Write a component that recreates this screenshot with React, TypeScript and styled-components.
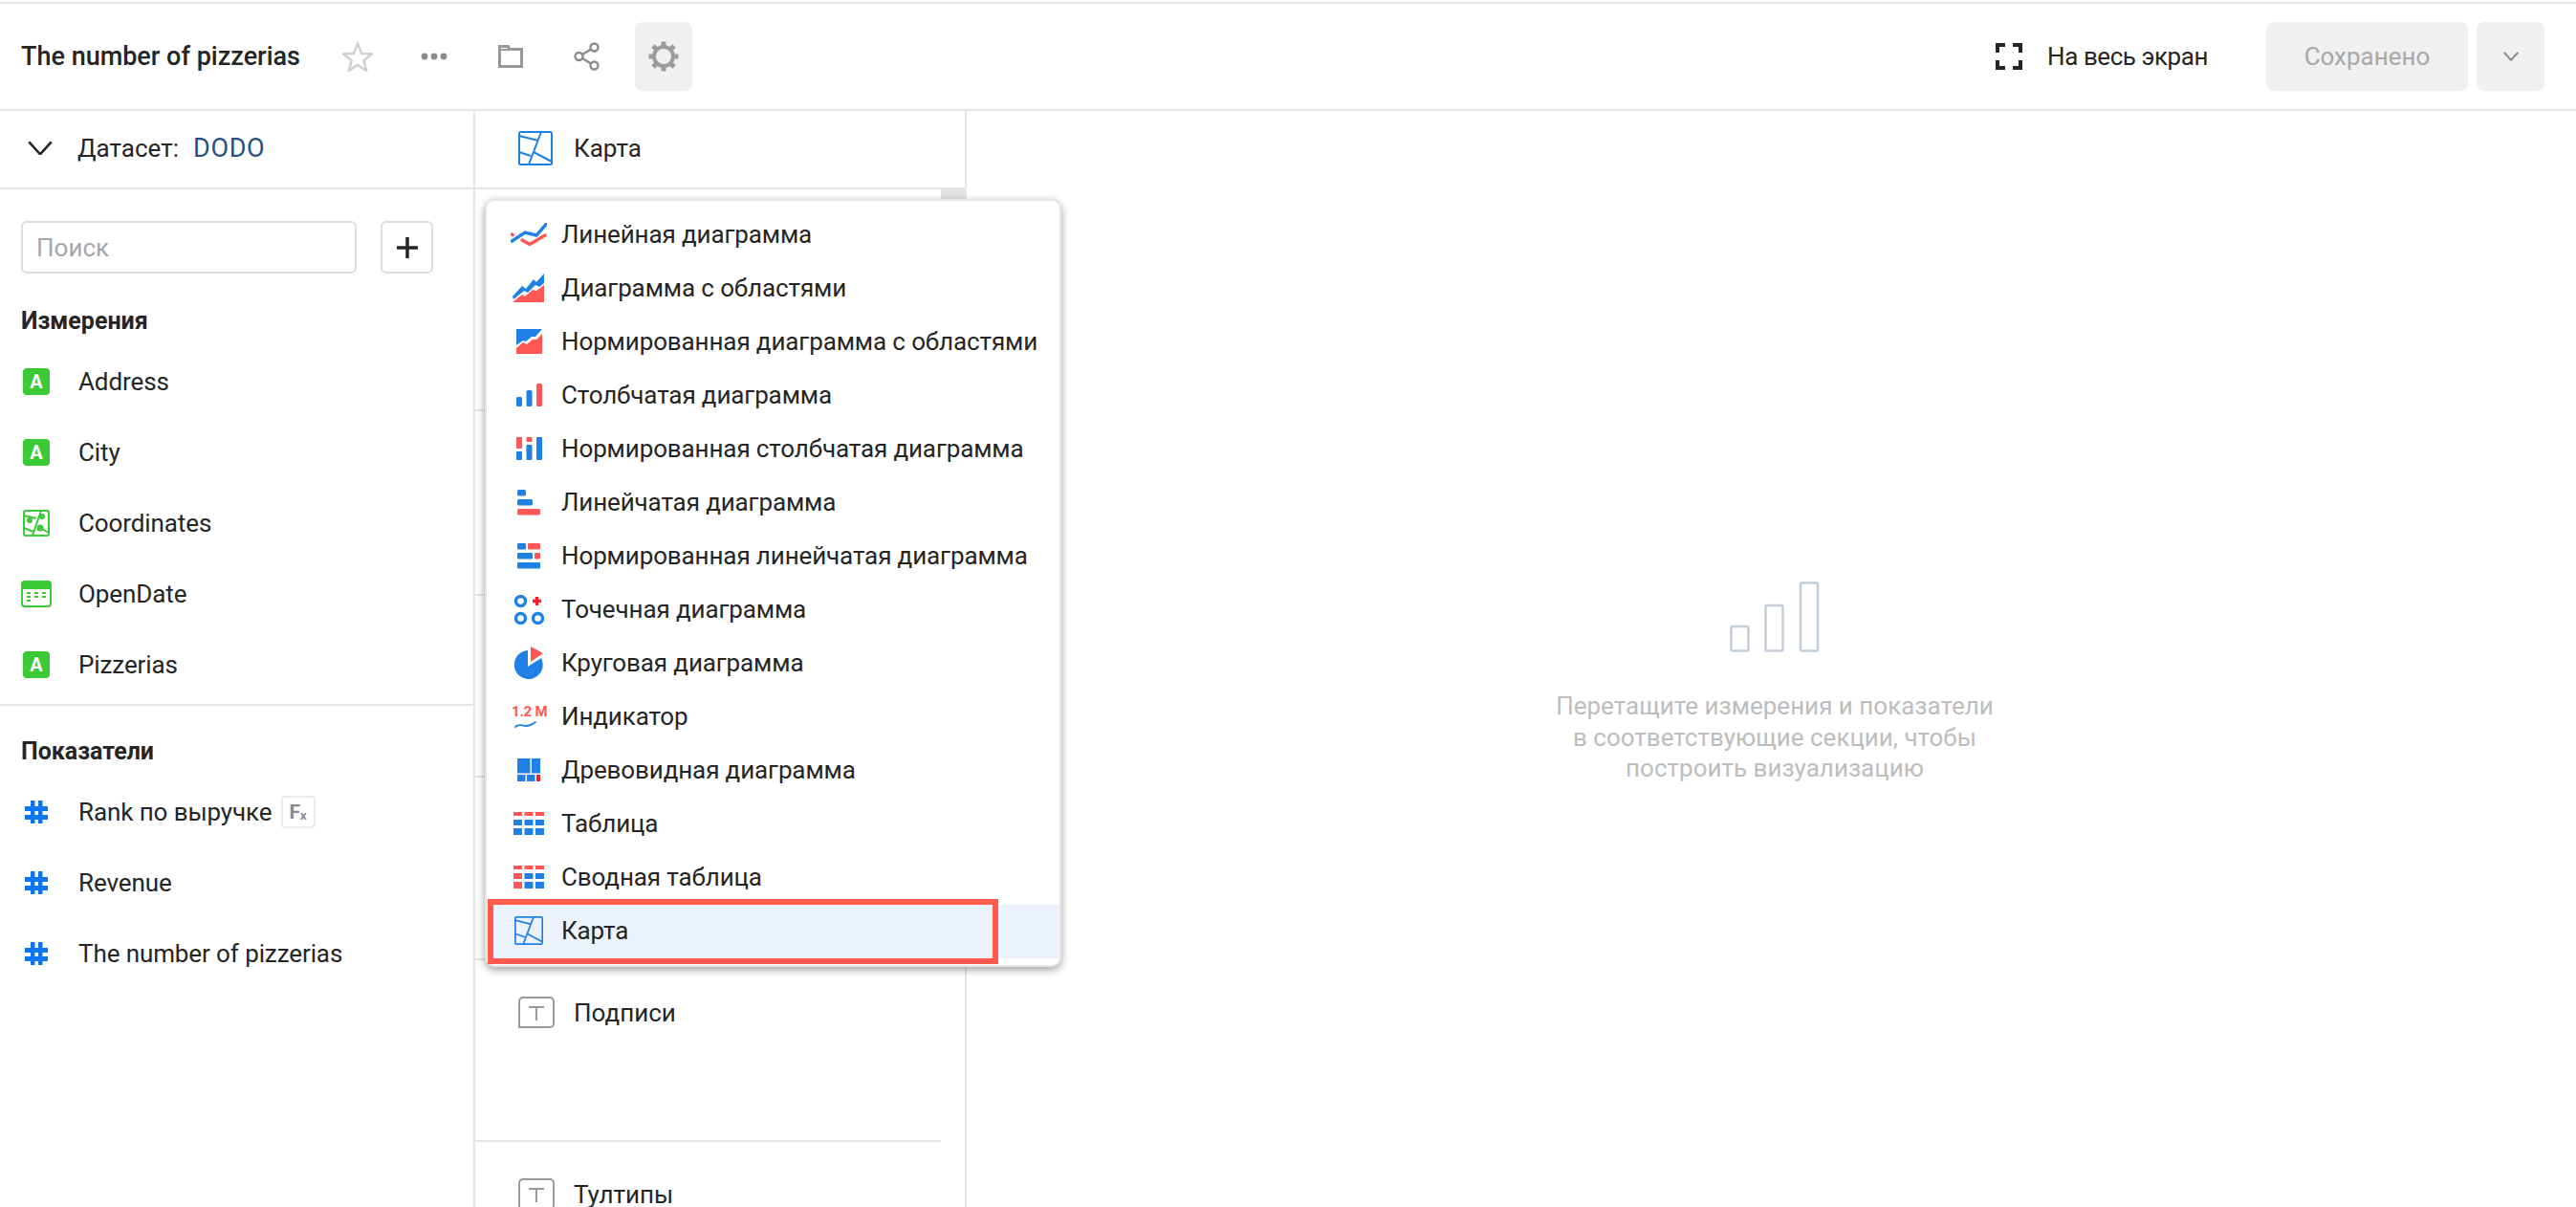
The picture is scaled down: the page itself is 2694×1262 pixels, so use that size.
import React from "react";
import styled, { createGlobalStyle } from "styled-components";

const GlobalStyle = createGlobalStyle`
  html, body {
    margin: 0;
    padding: 0;
    background: #fff;
  }
  * {
    box-sizing: border-box;
  }
`;

const BLUE = "#1f80e6";
const RED = "#ff5656";
const GREEN = "#3bc935";
const LINE = "#e5e5e5";

const Page = styled.div`
  width: 2694px;
  height: 1262px;
  overflow: hidden;
  display: flex;
  flex-direction: column;
  padding-top: 2px;
  background: #fff;
  color: #252525;
  font-family: Roboto, "Noto Sans", sans-serif;
  font-size: 26px;
`;

const Header = styled.header`
  height: 114px;
  flex: none;
  display: flex;
  align-items: center;
  padding: 0 33px 0 22px;
  border-top: 2px solid ${LINE};
  border-bottom: 2px solid ${LINE};
`;

const Title = styled.h1`
  width: 322px;
  margin: 0;
  font-size: 27px;
  font-weight: 500;
  white-space: nowrap;
`;

const ActionGroup = styled.div`
  display: flex;
  gap: 20px;
`;

const IconButton = styled.button<{ $active?: boolean }>`
  width: 60px;
  height: 72px;
  padding: 0;
  border: none;
  border-radius: 8px;
  display: flex;
  align-items: center;
  justify-content: center;
  background: ${(p) => (p.$active ? "#f0f0f0" : "transparent")};
`;

const Spacer = styled.div`
  flex: 1;
`;

const FullscreenLabel = styled.div`
  display: flex;
  align-items: center;
  gap: 26px;
  margin-right: 61px;
  letter-spacing: -0.45px;
`;

const SaveButton = styled.button`
  width: 211px;
  height: 72px;
  border: none;
  border-radius: 8px;
  background: #f0f0f0;
  color: #a8a8a8;
  font: inherit;
`;

const MoreButton = styled.button`
  width: 71px;
  height: 72px;
  margin-left: 9px;
  padding: 0;
  border: none;
  border-radius: 8px;
  background: #f0f0f0;
  display: flex;
  align-items: center;
  justify-content: center;
`;

const Body = styled.div`
  flex: 1;
  display: flex;
  min-height: 0;
`;

const Sidebar = styled.aside`
  width: 497px;
  flex: none;
  border-right: 2px solid ${LINE};
`;

const DatasetRow = styled.div`
  height: 82px;
  display: flex;
  align-items: center;
  padding: 0 0 3px 29px;
  border-bottom: 2px solid ${LINE};
`;

const DatasetLabel = styled.span`
  margin-left: 26px;
`;

const DatasetLink = styled.span`
  margin-left: 15px;
  color: #27527f;
  font-size: 27px;
  letter-spacing: 0.7px;
`;

const SearchRow = styled.div`
  display: flex;
  gap: 25px;
  padding: 33px 0 22px 22px;
`;

const SearchInput = styled.div`
  width: 351px;
  height: 55px;
  padding-left: 14px;
  border: 2px solid #dcdcdc;
  border-radius: 6px;
  display: flex;
  align-items: center;
  color: #a6a6a6;
`;

const AddButton = styled.div`
  width: 55px;
  height: 55px;
  border: 2px solid #dcdcdc;
  border-radius: 6px;
  display: flex;
  align-items: center;
  justify-content: center;
`;

const GroupTitle = styled.h2`
  height: 54px;
  margin: 0;
  padding-left: 22px;
  display: flex;
  align-items: center;
  font-size: 25px;
  font-weight: 700;
`;

const FieldRow = styled.div`
  height: 74px;
  display: flex;
  align-items: center;
  letter-spacing: -0.1px;
`;

const FieldIcon = styled.div`
  width: 76px;
  padding-left: 38px;
  margin-right: 6px;
  display: flex;
  justify-content: center;
  transform: translateX(-19px);
  flex: none;
`;

const AttrBadge = styled.span`
  width: 28px;
  height: 28px;
  border-radius: 4px;
  background: ${GREEN};
  color: #fff;
  font-size: 20px;
  font-weight: 700;
  display: flex;
  align-items: center;
  justify-content: center;
`;

const FxBadge = styled.span`
  width: 36px;
  height: 34px;
  margin-left: 9px;
  border: 2px solid #ececec;
  border-radius: 4px;
  color: #8a8a8a;
  font-size: 21px;
  font-weight: 700;
  display: flex;
  align-items: center;
  justify-content: center;

  sub {
    font-size: 13px;
    line-height: 1;
    margin-top: 6px;
  }
`;

const Divider = styled.div`
  height: 2px;
  margin: 4px 0 20px;
  background: ${LINE};
`;

const Middle = styled.section`
  width: 514px;
  flex: none;
  position: relative;
  border-right: 2px solid ${LINE};
  display: flex;
  flex-direction: column;
`;

const ChartTypeRow = styled.div`
  height: 82px;
  flex: none;
  display: flex;
  align-items: center;
  padding: 0 0 3px 45px;
  gap: 22px;
  border-bottom: 2px solid ${LINE};
`;

const SectionsArea = styled.div`
  flex: 1;
  display: flex;
  min-height: 0;
`;

const Sections = styled.div`
  flex: 1;
`;

const Section = styled.div<{ $height: number }>`
  height: ${(p) => p.$height}px;
  padding: 38px 0 0 45px;
  border-bottom: 2px solid ${LINE};

  &:last-child {
    border-bottom: none;
  }
`;

const PlaceholderRow = styled.div`
  display: flex;
  align-items: center;
  gap: 20px;
`;

const ScrollTrack = styled.div`
  width: 25px;
  flex: none;
`;

const ScrollThumb = styled.div`
  height: 300px;
  background: #e4e4e4;
`;

const Menu = styled.div`
  position: absolute;
  left: 10px;
  top: 92px;
  width: 603px;
  padding: 8px 0 7px;
  background: #fff;
  border: 2px solid ${LINE};
  border-radius: 10px;
  box-shadow: 0 3px 9px rgba(0, 0, 0, 0.38);
  z-index: 2;
`;

const MenuItem = styled.div<{ $active?: boolean }>`
  position: relative;
  height: 56px;
  padding: 0 0 2px 23px;
  display: flex;
  align-items: center;
  gap: 13px;
  white-space: nowrap;
  letter-spacing: -0.12px;
  background: ${(p) => (p.$active ? "#ebf2fc" : "transparent")};
`;

const MenuIcon = styled.div`
  width: 42px;
  flex: none;
  display: flex;
  justify-content: center;
`;

const Annotation = styled.div`
  position: absolute;
  left: 1px;
  top: -6px;
  width: 534px;
  height: 68px;
  border: 6px solid #ff5a4f;
`;

const Canvas = styled.main`
  flex: 1;
  padding: 492px 0 0 7px;
  display: flex;
  flex-direction: column;
  align-items: center;
`;

const EmptyText = styled.p`
  margin: 40px 0 0;
  color: #bdbdbd;
  line-height: 32.5px;
  text-align: center;
`;

function StarIcon() {
  return (
    <svg width="32" height="32" viewBox="0 0 32 32" fill="none" stroke="#cfcfcf" strokeWidth="2.4">
      <path d="M16 2.5l4 10.4 10.8.6-8.4 6.9 2.8 10.6-9.2-6-9.2 6 2.8-10.6-8.4-6.9 10.8-.6z" />
    </svg>
  );
}

function DotsIcon() {
  return (
    <svg width="28" height="8" viewBox="0 0 28 8" fill="#8c8c8c">
      <circle cx="4" cy="4" r="3.4" />
      <circle cx="14" cy="4" r="3.4" />
      <circle cx="24" cy="4" r="3.4" />
    </svg>
  );
}

function FolderIcon() {
  return (
    <svg width="26" height="24" viewBox="0 0 26 24" fill="none" stroke="#999" strokeWidth="3">
      <path d="M1.5 22.5V1.5h9l1.5 3h12.500v18z" />
      <path d="M1.500 5h11" strokeWidth="2" />
    </svg>
  );
}

function ShareIcon() {
  return (
    <svg width="28" height="30" viewBox="0 0 28 30" fill="none" stroke="#8c8c8c" strokeWidth="2.400">
      <circle cx="21.500" cy="5.500" r="4" />
      <circle cx="5.500" cy="15" r="4" />
      <circle cx="21.500" cy="24.500" r="4" />
      <path d="M9 13l9-5.500M9 17l9 5.500" />
    </svg>
  );
}

function GearIcon() {
  const teeth = [0, 45, 90, 135, 180, 225, 270, 315];
  return (
    <svg width="34" height="34" viewBox="0 0 34 34" fill="none" stroke="#9c9c9c">
      <circle cx="17" cy="17" r="10" strokeWidth="4" />
      {teeth.map((deg) => (
        <path key={deg} d="M17 1.500v6" strokeWidth="5" transform={`rotate(${deg} 17 17)`} />
      ))}
    </svg>
  );
}

function FullscreenIcon() {
  return (
    <svg width="28" height="28" viewBox="0 0 28 28" fill="none" stroke="#252525" strokeWidth="4">
      <path d="M10 2H2v8M18 2h8v8M10 26H2v-8M18 26h8v-8" />
    </svg>
  );
}

function ChevronIcon({ size, color, width }: { size: number; color: string; width: number }) {
  return (
    <svg width={size} height={size * 0.6} viewBox="0 0 20 12" fill="none" stroke={color} strokeWidth={width}>
      <path d="M1 1l9 10 9-10" />
    </svg>
  );
}

function PlusIcon() {
  return (
    <svg width="24" height="24" viewBox="0 0 24 24" fill="none" stroke="#252525" strokeWidth="3.500">
      <path d="M12 1v22M1 12h22" />
    </svg>
  );
}

function MapIcon({ size }: { size: number }) {
  return (
    <svg width={size} height={size} viewBox="0 0 36 36" fill="none" stroke={BLUE} strokeWidth="2">
      <rect x="1" y="1" width="34" height="34" rx="1.500" />
      <path d="M1 5l20 5M24 1L11 35M16 22l19 10M1 22l12 4" />
    </svg>
  );
}

function CoordinatesIcon() {
  return (
    <svg width="28" height="28" viewBox="0 0 28 28" fill="none" stroke={GREEN} strokeWidth="2">
      <rect x="1" y="1" width="26" height="26" rx="2" />
      <path d="M1 6l13 3M19 1l-9 26M1 19l10 4M18 19l9 5" />
      <g fill={GREEN} stroke="none">
        <circle cx="7" cy="11" r="3" />
        <circle cx="20" cy="7" r="3" />
        <circle cx="18" cy="19" r="3.500" />
      </g>
    </svg>
  );
}

function DateIcon() {
  return (
    <svg width="32" height="28" viewBox="0 0 32 28" fill="none">
      <rect x="1" y="1" width="30" height="26" rx="3" stroke={GREEN} strokeWidth="2" />
      <path d="M1 4a3 3 0 0 1 3-3h24a3 3 0 0 1 3 3v5H1z" fill={GREEN} />
      <g fill={GREEN}>
        <rect x="6" y="12" width="4" height="2" />
        <rect x="6" y="16" width="4" height="2" />
        <rect x="6" y="20" width="4" height="2" />
        <rect x="14" y="12" width="4" height="2" />
        <rect x="14" y="16" width="4" height="2" />
        <rect x="22" y="12" width="4" height="2" />
        <rect x="22" y="16" width="4" height="2" />
      </g>
    </svg>
  );
}

function HashIcon() {
  return (
    <svg width="24" height="24" viewBox="0 0 24 24" fill="#0f76ee">
      <rect x="6" y="0" width="4.500" height="24" />
      <rect x="14" y="0" width="4.500" height="24" />
      <rect x="0" y="6" width="24" height="5" />
      <rect x="0" y="15" width="24" height="5" />
    </svg>
  );
}

function TextFieldIcon() {
  return (
    <svg width="38" height="33" viewBox="0 0 38 33" fill="none" stroke="#999" strokeWidth="2">
      <path d="M5 1h28a4 4 0 0 1 4 4v23a4 4 0 0 1-4 4H1V5a4 4 0 0 1 4-4z" />
      <path d="M11 11h16M19 11v14" />
    </svg>
  );
}

function EmptyChartIcon() {
  return (
    <svg width="94" height="74" viewBox="0 0 94 74" fill="none" stroke="#c2cedc" strokeWidth="2.500">
      <rect x="1.500" y="47" width="18" height="25.500" rx="1.500" />
      <rect x="37.500" y="25" width="18" height="47.500" rx="1.500" />
      <rect x="74" y="1.500" width="18" height="71" rx="1.500" />
    </svg>
  );
}

function LineChartIcon() {
  return (
    <svg width="38" height="24" viewBox="0 0 38 24" fill="none" strokeWidth="3.400" strokeLinecap="round">
      <path d="M12 18l8 4.500 16-9.500" stroke={RED} />
      <path d="M1.500 12l1 .8" stroke={RED} />
      <path d="M1.500 19L15 10l12 3L37 1.500" stroke={BLUE} />
    </svg>
  );
}

function AreaChartIcon() {
  return (
    <svg width="34" height="30" viewBox="0 0 34 30">
      <path d="M0 24l10-11 4 3 8-10 3 3 8-9v10l-5 4-4-2-8 8-4-2L1 27z" fill={BLUE} />
      <path d="M0 30l10-8 3 2 8-7 4 1 8-6v18z" fill={RED} />
    </svg>
  );
}

function NormAreaIcon() {
  return (
    <svg width="27" height="26" viewBox="0 0 27 26">
      <path d="M0 0h27l-7 8h-4l-6 5-3-1-7 5z" fill={BLUE} />
      <path d="M0 26v-6l7-6 4 2 6-5h4l6-6v21z" fill={RED} />
    </svg>
  );
}

function ColumnsIcon() {
  return (
    <svg width="27" height="24" viewBox="0 0 27 24">
      <rect x="0" y="14" width="6" height="10" rx="1.500" fill={BLUE} />
      <rect x="10.500" y="7" width="6" height="17" rx="1.500" fill={BLUE} />
      <rect x="21" y="0" width="6" height="24" rx="1.500" fill={RED} />
    </svg>
  );
}

function NormColumnsIcon() {
  return (
    <svg width="27" height="24" viewBox="0 0 27 24">
      <rect x="0" y="0" width="6" height="12" rx="1" fill={RED} />
      <rect x="0" y="15" width="6" height="9" rx="1" fill={BLUE} />
      <rect x="10.500" y="0" width="6" height="5" rx="1" fill={RED} />
      <rect x="10.500" y="8" width="6" height="16" rx="1" fill={BLUE} />
      <rect x="21" y="0" width="6" height="24" rx="1" fill={BLUE} />
    </svg>
  );
}

function BarsIcon() {
  return (
    <svg width="24" height="27" viewBox="0 0 24 27">
      <rect x="0" y="0" width="9" height="6.500" rx="1.500" fill={BLUE} />
      <rect x="0" y="10" width="16" height="6.500" rx="1.500" fill={BLUE} />
      <rect x="0" y="20" width="24" height="6.500" rx="1.500" fill={RED} />
    </svg>
  );
}

function NormBarsIcon() {
  return (
    <svg width="24" height="27" viewBox="0 0 24 27">
      <rect x="0" y="0" width="9" height="6.500" rx="1" fill={BLUE} />
      <rect x="11" y="0" width="13" height="6.500" rx="1" fill={RED} />
      <rect x="0" y="10" width="16" height="6.500" rx="1" fill={BLUE} />
      <rect x="18" y="10" width="6" height="6.500" rx="1" fill={RED} />
      <rect x="0" y="20" width="24" height="6.500" rx="1" fill={BLUE} />
    </svg>
  );
}

function DotsChartIcon() {
  return (
    <svg width="31" height="31" viewBox="0 0 31 31" fill="none" stroke={BLUE} strokeWidth="3.400">
      <circle cx="6.500" cy="6.500" r="5" />
      <circle cx="6.500" cy="24.500" r="5" />
      <circle cx="24.500" cy="24.500" r="5" />
      <path d="M23.500 2v9M19 6.500h9" stroke="#f5222d" />
    </svg>
  );
}

function PieIcon() {
  return (
    <svg width="30" height="34" viewBox="0 0 30 34">
      <path d="M14 4A15 15 0 1 0 28 12L14 21z" fill={BLUE} />
      <path d="M17 0l13 7-13 9z" fill={RED} />
    </svg>
  );
}

function IndicatorIcon() {
  return (
    <svg width="42" height="26" viewBox="0 0 42 26" fill="none">
      <text x="3" y="13" fill={RED} fontFamily="Roboto, sans-serif" fontSize="15" fontWeight="700" letterSpacing="-0.2">
        1.2 M
      </text>
      <path d="M7 24c4-4 7-1 11-1s6-1 10-4" stroke={BLUE} strokeWidth="1.800" strokeLinecap="round" />
    </svg>
  );
}

function TreemapIcon() {
  return (
    <svg width="24" height="24" viewBox="0 0 24 24">
      <rect x="0" y="0" width="13.500" height="15.500" fill={BLUE} />
      <rect x="15" y="0" width="9" height="15.500" fill={BLUE} />
      <rect x="0" y="17" width="8.500" height="7" fill={BLUE} />
      <rect x="10" y="17" width="8.500" height="7" fill={BLUE} />
      <rect x="20" y="17" width="4" height="7" fill="#f5222d" />
    </svg>
  );
}

function TableIcon({ pivot }: { pivot?: boolean }) {
  const cols = [0, 11.500, 23];
  return (
    <svg width="32" height="24" viewBox="0 0 32 24">
      {cols.map((x, i) => (
        <React.Fragment key={x}>
          <rect x={x} y="0" width="9" height="4" fill={RED} />
          <rect x={x} y="8" width="9" height="6" fill={pivot && i === 0 ? RED : BLUE} />
          <rect x={x} y="17" width="9" height="7" fill={pivot && i === 0 ? RED : BLUE} />
        </React.Fragment>
      ))}
    </svg>
  );
}

const dimensions = [
  { name: "Address", icon: <AttrBadge>A</AttrBadge> },
  { name: "City", icon: <AttrBadge>A</AttrBadge> },
  { name: "Coordinates", icon: <CoordinatesIcon /> },
  { name: "OpenDate", icon: <DateIcon /> },
  { name: "Pizzerias", icon: <AttrBadge>A</AttrBadge> },
];

const measures = [
  { name: "Rank по выручке", formula: true },
  { name: "Revenue" },
  { name: "The number of pizzerias" },
];

const chartTypes = [
  { name: "Линейная диаграмма", icon: <LineChartIcon /> },
  { name: "Диаграмма с областями", icon: <AreaChartIcon /> },
  { name: "Нормированная диаграмма с областями", icon: <NormAreaIcon /> },
  { name: "Столбчатая диаграмма", icon: <ColumnsIcon /> },
  { name: "Нормированная столбчатая диаграмма", icon: <NormColumnsIcon /> },
  { name: "Линейчатая диаграмма", icon: <BarsIcon /> },
  { name: "Нормированная линейчатая диаграмма", icon: <NormBarsIcon /> },
  { name: "Точечная диаграмма", icon: <DotsChartIcon /> },
  { name: "Круговая диаграмма", icon: <PieIcon /> },
  { name: "Индикатор", icon: <IndicatorIcon /> },
  { name: "Древовидная диаграмма", icon: <TreemapIcon /> },
  { name: "Таблица", icon: <TableIcon /> },
  { name: "Сводная таблица", icon: <TableIcon pivot /> },
];

export default function App() {
  return (
    <Page>
      <GlobalStyle />
      <Header>
        <Title>The number of pizzerias</Title>
        <ActionGroup>
          <IconButton><StarIcon /></IconButton>
          <IconButton><DotsIcon /></IconButton>
          <IconButton><FolderIcon /></IconButton>
          <IconButton><ShareIcon /></IconButton>
          <IconButton $active><GearIcon /></IconButton>
        </ActionGroup>
        <Spacer />
        <FullscreenLabel>
          <FullscreenIcon />
          На весь экран
        </FullscreenLabel>
        <SaveButton>Сохранено</SaveButton>
        <MoreButton><ChevronIcon size={16} color="#888" width={2.5} /></MoreButton>
      </Header>
      <Body>
        <Sidebar>
          <DatasetRow>
            <ChevronIcon size={26} color="#252525" width={2} />
            <DatasetLabel>Датасет:</DatasetLabel>
            <DatasetLink>DODO</DatasetLink>
          </DatasetRow>
          <SearchRow>
            <SearchInput>Поиск</SearchInput>
            <AddButton><PlusIcon /></AddButton>
          </SearchRow>
          <GroupTitle>Измерения</GroupTitle>
          {dimensions.map((field) => (
            <FieldRow key={field.name}>
              <FieldIcon>{field.icon}</FieldIcon>
              {field.name}
            </FieldRow>
          ))}
          <Divider />
          <GroupTitle>Показатели</GroupTitle>
          {measures.map((field) => (
            <FieldRow key={field.name}>
              <FieldIcon><HashIcon /></FieldIcon>
              {field.name}
              {field.formula && <FxBadge>F<sub>x</sub></FxBadge>}
            </FieldRow>
          ))}
        </Sidebar>
        <Middle>
          <ChartTypeRow>
            <MapIcon size={36} />
            Карта
          </ChartTypeRow>
          <SectionsArea>
            <Sections>
              <Section $height={232} />
              <Section $height={193} />
              <Section $height={190} />
              <Section $height={191} />
              <Section $height={190}>
                <PlaceholderRow><TextFieldIcon />Подписи</PlaceholderRow>
              </Section>
              <Section $height={70}>
                <PlaceholderRow><TextFieldIcon />Тултипы</PlaceholderRow>
              </Section>
            </Sections>
            <ScrollTrack><ScrollThumb /></ScrollTrack>
          </SectionsArea>
          <Menu>
            {chartTypes.map((chart) => (
              <MenuItem key={chart.name}>
                <MenuIcon>{chart.icon}</MenuIcon>
                {chart.name}
              </MenuItem>
            ))}
            <MenuItem $active>
              <MenuIcon><MapIcon size={30} /></MenuIcon>
              Карта
              <Annotation />
            </MenuItem>
          </Menu>
        </Middle>
        <Canvas>
          <EmptyChartIcon />
          <EmptyText>
            Перетащите измерения и показатели
            <br />
            в соответствующие секции, чтобы
            <br />
            построить визуализацию
          </EmptyText>
        </Canvas>
      </Body>
    </Page>
  );
}
